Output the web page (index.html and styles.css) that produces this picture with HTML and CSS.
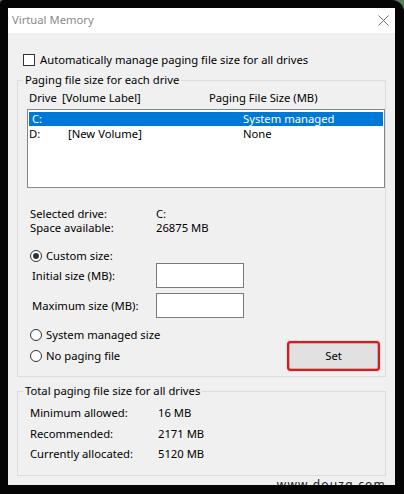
FILE: index.html
```html
<!DOCTYPE html>
<html lang="en">
<head>
<meta charset="utf-8">
<title>Virtual Memory</title>
<link rel="stylesheet" href="styles.css">
</head>
<body>
<div class="frame">
  <div class="window">
    <div class="titlebar">
      <span class="title">Virtual Memory</span>
      <svg class="close" width="11" height="11" viewBox="0 0 11 11"><path d="M0.5 0.5 L10.5 10.5 M10.5 0.5 L0.5 10.5" stroke="#6e6e6e" stroke-width="1" fill="none"/></svg>
    </div>
    <div class="content">
      <div class="check-row"><span class="checkbox"></span><span>Automatically manage paging file size for all drives</span></div>

      <fieldset class="group group-drives">
        <legend>Paging file size for each drive</legend>
        <div class="list-header"><span>Drive</span><span>[Volume Label]</span><span>Paging File Size (MB)</span></div>
        <div class="listbox">
          <div class="list-row selected"><span class="drive">C:</span><span></span><span>System managed</span></div>
          <div class="list-row"><span>D:</span><span>[New Volume]</span><span>None</span></div>
        </div>
        <div class="info">
          <span>Selected drive:</span><span>C:</span>
          <span>Space available:</span><span>26875 MB</span>
        </div>
        <div class="radio-row custom"><span class="radio checked"></span><span>Custom size:</span></div>
        <div class="size-grid">
          <span>Initial size (MB):</span><span class="textbox"></span>
          <span>Maximum size (MB):</span><span class="textbox"></span>
        </div>
        <div class="bottom-row">
          <div class="radios">
            <div class="radio-row"><span class="radio"></span><span>System managed size</span></div>
            <div class="radio-row"><span class="radio"></span><span>No paging file</span></div>
          </div>
          <button class="set-btn">Set</button>
        </div>
      </fieldset>

      <fieldset class="group group-total">
        <legend>Total paging file size for all drives</legend>
        <div class="totals">
          <span>Minimum allowed:</span><span>16 MB</span>
          <span>Recommended:</span><span>2171 MB</span>
          <span>Currently allocated:</span><span>5120 MB</span>
        </div>
      </fieldset>
      <div class="watermark">www.douzq.com</div>
    </div>
  </div>
</div>
</body>
</html>
```

FILE: styles.css
```css
* { box-sizing: border-box; }
html, body { margin: 0; padding: 0; }
body {
  width: 404px;
  height: 494px;
  background: #5d7d5d;
  font-family: "Noto Sans", sans-serif;
  font-size: 11.25px;
  color: #000;
  overflow: hidden;
}
.frame {
  width: 404px;
  height: 494px;
  background: #050505;
  border-radius: 4px 12px 0 0;
  padding: 8px 9px 9px 8px;
}
.window {
  width: 387px;
  height: 477px;
  background: #f0f0f0;
  display: flex;
  flex-direction: column;
  overflow: hidden;
}
.titlebar {
  height: 25px;
  background: #fff;
  display: flex;
  align-items: center;
  justify-content: space-between;
  padding: 0 6px 0 4px;
  flex: none;
}
.title { color: #8a8a8a; line-height: 16px; margin-top: -2px; }
.close { display: block; margin-top: 0; }
.content {
  padding: 0 9px;
  display: flex;
  flex-direction: column;
  flex: 1;
}
.check-row {
  margin-top: 19px;
  margin-left: 6px;
  height: 16px;
  display: flex;
  align-items: center;
  gap: 5px;
  line-height: 16px;
}
.checkbox {
  width: 12px;
  height: 12px;
  border: 1px solid #333;
  background: #fff;
  flex: none;
}
.group {
  margin: 0;
  padding: 0;
  border: 1px solid #dcdcdc;
  min-width: 0;
}
.group legend {
  margin-left: 5px;
  padding: 0 2px;
  line-height: 16px;
}
.group-drives { margin-top: 4px; padding-bottom: 5px; }
.list-header {
  margin-top: 2px;
  padding-left: 11px;
  display: grid;
  grid-template-columns: 33px 147px auto;
  line-height: 16px;
}
.listbox {
  margin-top: 3px;
  margin-left: 9px;
  width: 358px;
  height: 79px;
  border: 1px solid #828790;
  background: #fff;
  padding: 2px 1px;
}
.list-row {
  height: 14px;
  line-height: 14px;
  display: grid;
  grid-template-columns: 39px 175px auto;
}
.list-row + .list-row { margin-top: 1px; }
.list-row.selected { background: #0078d7; color: #fff; }
.list-row.selected .drive { padding-left: 3px; }
.info {
  margin-top: 19px;
  padding-left: 12px;
  display: grid;
  grid-template-columns: 126px auto;
  grid-auto-rows: 14px;
  line-height: 14px;
}
.radio-row {
  height: 16px;
  display: flex;
  align-items: center;
  gap: 4px;
  line-height: 16px;
}
.radio-row.custom {
  margin-top: 13px;
  margin-left: 12px;
  height: 15px;
}
.radio {
  width: 12px;
  height: 12px;
  border: 1px solid #333;
  border-radius: 50%;
  background: #fff;
  flex: none;
  display: flex;
  align-items: center;
  justify-content: center;
}
.radio.checked::after {
  content: "";
  width: 6px;
  height: 6px;
  border-radius: 50%;
  background: #333;
}
.size-grid {
  padding-left: 14px;
  display: grid;
  grid-template-columns: 124px 88px;
  grid-auto-rows: 25px;
  row-gap: 5px;
  align-items: center;
  line-height: 16px;
}
.textbox {
  height: 25px;
  border: 1px solid #7a7a7a;
  background: #fff;
}
.bottom-row {
  margin-top: 9px;
  padding-left: 12px;
  padding-right: 5px;
  display: flex;
  justify-content: space-between;
  align-items: flex-start;
}
.radios { display: flex; flex-direction: column; gap: 5px; }
.set-btn {
  margin-top: 14px;
  width: 93px;
  height: 30px;
  border: 2px solid #e3161d;
  border-radius: 4px;
  background: #e1e1e1;
  box-shadow: inset 0 0 0 1px #b4b4b4, 0 0 1px 0 #f04040;
  font: inherit;
  color: #000;
  padding: 0;
  line-height: 16px;
}
.group-total { margin-top: 6px; }
.totals {
  padding: 6px 0 13px 12px;
  display: grid;
  grid-template-columns: 128px auto;
  grid-auto-rows: 16px;
  row-gap: 4.5px;
  line-height: 16px;
}
.watermark {
  margin-top: 1px;
  align-self: flex-end;
  margin-right: 0;
  color: #222;
  font-size: 12px;
  letter-spacing: 1.2px;
  line-height: 16px;
}
```
